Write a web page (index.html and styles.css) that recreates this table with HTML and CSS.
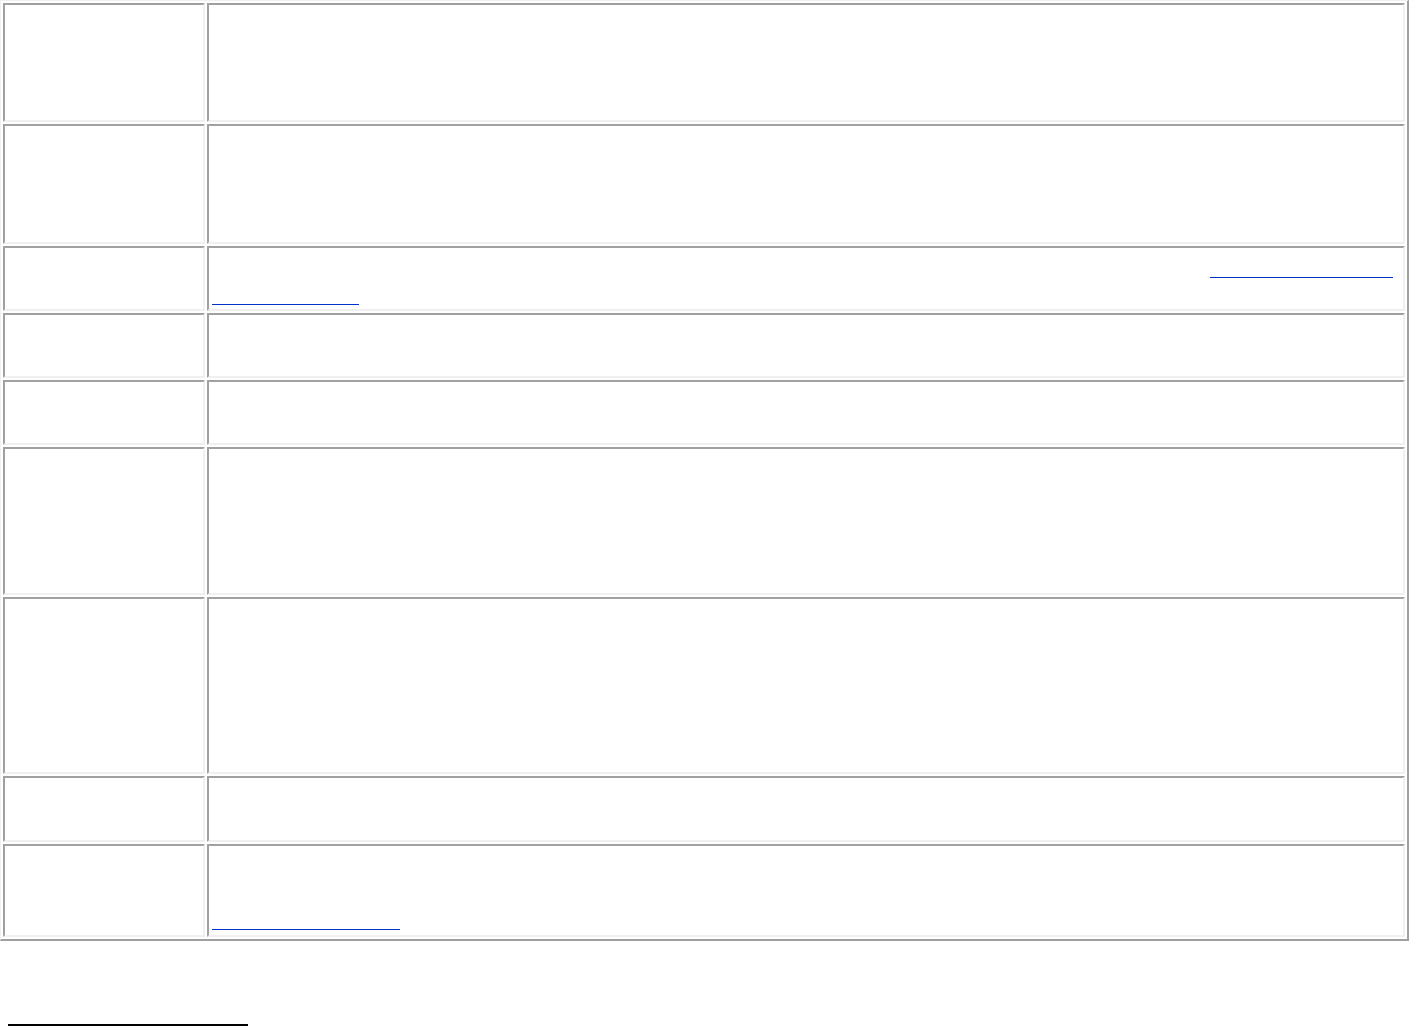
FILE: index.html
```html
<!DOCTYPE html>
<html lang="en">
<head>
    <meta charset="UTF-8">
    <meta name="viewport" content="width=device-width, initial-scale=1.0">
    <title>Table</title>
    <link rel="stylesheet" href="styles.css">
</head>
<body>
    <table class="grid">
        <colgroup>
            <col class="col-key">
            <col class="col-val">
        </colgroup>
        <tr class="row-119"><td></td><td></td></tr>
        <tr class="row-120"><td></td><td></td></tr>
        <tr class="row-65">
            <td></td>
            <td>
                <div class="line line-end"><a href="#" class="ref ref-183"></a></div>
                <div class="line"><a href="#" class="ref ref-147"></a></div>
            </td>
        </tr>
        <tr class="row-65"><td></td><td></td></tr>
        <tr class="row-65"><td></td><td></td></tr>
        <tr class="row-148"><td></td><td></td></tr>
        <tr class="row-177"><td></td><td></td></tr>
        <tr class="row-66"><td></td><td></td></tr>
        <tr class="row-93">
            <td></td>
            <td>
                <div class="line"></div>
                <div class="line"></div>
                <div class="line"><a href="#" class="ref ref-188"></a></div>
            </td>
        </tr>
    </table>
    <div class="footnotes"></div>
</body>
</html>
```

FILE: styles.css
```css
body {
    margin: 0;
    font-family: 'Liberation Serif', serif;
    font-size: 16px;
    background-color: #ffffff;
    color: #000000;
}
.grid {
    width: 1409px;
    table-layout: fixed;
    border-collapse: separate;
    border-spacing: 2px;
    border-style: solid;
    border-width: 1px 2px 2px 1px;
    border-color: #f0f0f0 #a0a0a0 #a0a0a0 #f0f0f0;
}
.col-key {
    width: 202px;
}
.grid td {
    padding: 3px;
    vertical-align: middle;
    border-style: solid;
    border-width: 2px;
    border-color: #a0a0a0 #f0f0f0 #f0f0f0 #a0a0a0;
}
.row-119 { height: 119px; }
.row-120 { height: 120px; }
.row-65 { height: 65px; }
.row-66 { height: 66px; }
.row-93 { height: 93px; }
.row-148 { height: 148px; }
.row-177 { height: 177px; }
.line {
    display: flex;
    height: 27px;
}
.line-end {
    justify-content: flex-end;
    padding-right: 7px;
}
.ref {
    display: block;
    height: 25px;
    border-bottom: 1px solid #0033cc;
}
.ref-183 { width: 183px; }
.ref-147 { width: 147px; }
.ref-188 { width: 188px; }
.footnotes {
    width: 240px;
    margin: 83px 0 0 8px;
    border-top: 2px solid #000000;
}
```
